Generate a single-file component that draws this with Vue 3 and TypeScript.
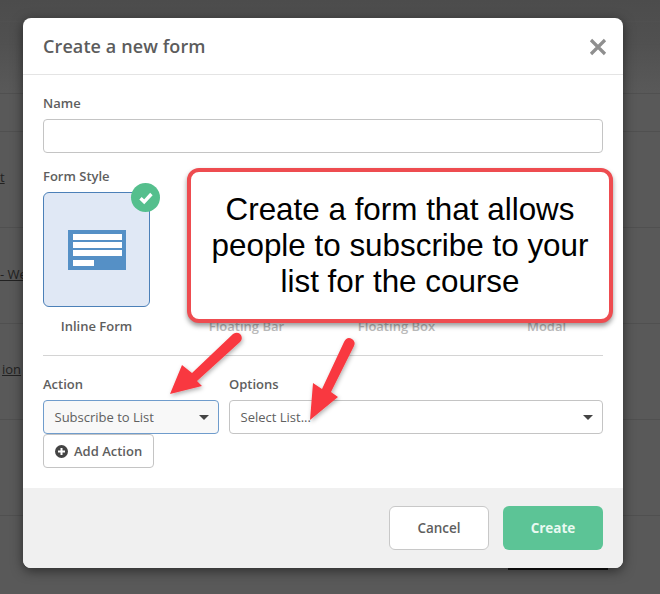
<script setup lang="ts">
const styles = [
  { name: 'Inline Form', active: true },
  { name: 'Floating Bar', active: false },
  { name: 'Floating Box', active: false },
  { name: 'Modal', active: false },
]
const backdropLines = [21, 44, 93, 131, 227, 323, 419, 515]
</script>

<template>
  <div class="page">
    <div class="backdrop">
      <i v-for="y in backdropLines" :key="y" class="bline" :style="{ top: y + 'px' }"></i>
      <span class="frag f1">t</span>
      <span class="frag f2">- We</span>
      <span class="frag f3">ion</span>
      <i class="blackbar"></i>
    </div>

    <div class="modal">
      <header class="head">
        <h2>Create a new form</h2>
        <svg class="close" width="18" height="18" viewBox="0 0 18 18"><path d="M2 2 L16 16 M16 2 L2 16" stroke="#8f8f8f" stroke-width="3.2" fill="none" /></svg>
      </header>
      <div class="body">
        <label class="lab">Name</label>
        <div class="input"></div>
        <label class="lab style-lab">Form Style</label>
        <div class="styles">
          <div v-for="s in styles" :key="s.name" class="style">
            <div class="card" :class="{ on: s.active }">
              <template v-if="s.active">
                <svg class="form-ic" width="58" height="40" viewBox="0 0 58 40">
                  <rect width="58" height="40" fill="#5590c6" />
                  <rect x="5" y="4" width="49" height="6" fill="#fff" />
                  <rect x="5" y="12" width="49" height="6" fill="#fff" />
                  <rect x="5" y="20" width="49" height="6" fill="#fff" />
                  <rect x="5" y="30" width="21" height="6" fill="#fff" />
                </svg>
                <span class="check">
                  <svg width="16" height="14" viewBox="0 0 16 14"><path d="M2.5 7.2 L6.2 10.8 L13.4 3" stroke="#fff" stroke-width="3.4" fill="none" /></svg>
                </span>
              </template>
            </div>
            <div class="style-name" :class="{ on: s.active }">{{ s.name }}</div>
          </div>
        </div>
        <hr class="rule" />
        <div class="actions">
          <div class="col-a">
            <label class="lab">Action</label>
            <div class="select focus">Subscribe to List<i class="caret"></i></div>
          </div>
          <div class="col-b">
            <label class="lab">Options</label>
            <div class="select">Select List...<i class="caret"></i></div>
          </div>
        </div>
        <button class="add" type="button">
          <svg width="13" height="13" viewBox="0 0 13 13"><circle cx="6.5" cy="6.5" r="6.5" fill="#444" /><path d="M6.5 3 V10 M3 6.5 H10" stroke="#fff" stroke-width="2" /></svg>
          Add Action
        </button>
      </div>
      <footer class="foot">
        <button class="btn cancel" type="button">Cancel</button>
        <button class="btn create" type="button">Create</button>
      </footer>
    </div>

    <div class="callout">Create a form that allows people to subscribe to your list for the course</div>

    <svg class="arrows" width="660" height="594" viewBox="0 0 660 594">
      <defs>
        <filter id="sh" x="-30%" y="-30%" width="160%" height="160%">
          <feDropShadow dx="1" dy="2" stdDeviation="2" flood-color="#000" flood-opacity="0.3" />
        </filter>
      </defs>
      <g filter="url(#sh)" fill="#f9393f">
        <path d="M170 394 L182 365 L192 373 L233 334 Q238 331 241 335 Q243 339 240 342 L197 381 L202 386 Z" />
        <path d="M310 420 L313 383 L322 389 L344 342 Q347 336 352 339 Q356 342 354 346 L331 392 L338 397 Z" />
      </g>
    </svg>
  </div>
</template>

<style>
html, body { margin: 0; padding: 0; }
</style>

<style scoped>
.page {
  position: relative;
  width: 660px;
  height: 594px;
  overflow: hidden;
  background: #595959;
  font-family: "Open Sans", sans-serif;
  color: #5a5a5a;
  box-sizing: border-box;
  padding: 18px 37px 26px 23px;
}
.backdrop { position: absolute; inset: 0; background: linear-gradient(#4c4c4c 0, #505050 40px, #595959 93px); }
.bline { position: absolute; left: 0; right: 0; height: 1px; background: #505050; }
.frag { position: absolute; font-size: 13px; color: #222; text-decoration: underline; }
.f1 { left: 0; top: 168px; }
.f2 { left: 0; top: 265px; }
.f3 { left: 2px; top: 360px; }
.blackbar { position: absolute; left: 508px; top: 568px; width: 100px; height: 2px; background: #111; }
.modal {
  position: relative;
  width: 600px;
  height: 550px;
  background: #fff;
  border-radius: 8px;
  overflow: hidden;
  display: flex;
  flex-direction: column;
  box-shadow: 0 3px 12px rgba(0, 0, 0, 0.5);
}
.head {
  height: 57px;
  flex: none;
  box-sizing: border-box;
  border-bottom: 1px solid #e4e4e4;
  padding: 0 16px 0 20px;
  display: flex;
  align-items: center;
  justify-content: space-between;
}
h2 { margin: 0; font-size: 18px; font-weight: 550; letter-spacing: 0.1px; color: #5c5c5c; }
.close { position: relative; top: 1px; }
.body { flex: 1; padding: 19px 20px 0; display: flex; flex-direction: column; align-items: flex-start; }
.lab { display: block; font-size: 13px; line-height: 18px; font-weight: 550; color: #5e5e5e; height: 20px; }
.input { width: 100%; box-sizing: border-box; height: 34px; border: 1px solid #c4c4c4; border-radius: 4px; margin-top: 5px; }
.style-lab { margin-top: 14px; height: 25px; }
.styles { display: grid; grid-template-columns: repeat(4, 107px); column-gap: 43px; width: 100%; }
.style { display: flex; flex-direction: column; align-items: center; }
.card { position: relative; width: 107px; height: 115px; box-sizing: border-box; border-radius: 6px; border: 1px solid #e4e4e4; display: flex; align-items: center; justify-content: center; }
.card.on { background: #e0e8f5; border-color: #4c80b8; }
.check { position: absolute; right: -11px; top: -10px; width: 29px; height: 29px; border-radius: 50%; background: #55bf8d; display: flex; align-items: center; justify-content: center; }
.style-name { margin-top: 10px; font-size: 13px; line-height: 18px; font-weight: 550; color: #bbb; }
.style-name.on { color: #5e5e5e; }
.rule { width: 100%; height: 1px; border: 0; background: #d4d4d4; margin: 20px 0 0; }
.actions { display: flex; gap: 10px; width: 100%; margin-top: 19px; }
.col-a { width: 176px; flex: none; }
.col-b { flex: 1; }
.actions .lab { height: 25px; }
.select { position: relative; height: 34px; box-sizing: border-box; border: 1px solid #c4c4c4; border-radius: 4px; padding: 0 10.500px; font-size: 13px; line-height: 32px; color: #606060; }
.select.focus { border-color: #6f9ccc; background: #f8f8f8; }
.caret { position: absolute; right: 9px; top: 14px; border: 5px solid transparent; border-top-color: #444; border-bottom: 0; }
.add { height: 34px; width: 111px; box-sizing: border-box; background: #fff; border: 1px solid #c4c4c4; border-radius: 4px; padding: 0 0 0 11px; display: flex; align-items: center; gap: 6px; font: 550 13px "Open Sans", sans-serif; color: #5e5e5e; }
.foot { height: 80px; flex: none; background: #f0f0f0; display: flex; justify-content: flex-end; align-items: flex-start; gap: 14px; box-sizing: border-box; padding: 18px 20px 0; }
.btn { width: 100px; height: 44px; box-sizing: border-box; border-radius: 6px; font: 550 13.500px "Open Sans", sans-serif; }
.cancel { background: #fff; border: 1px solid #c8c8c8; color: #5e5e5e; }
.create { background: #5cc496; border: 0; color: #e9f9f1; font-weight: 700; }
.callout {
  position: absolute;
  left: 187px;
  top: 168px;
  width: 426px;
  height: 155px;
  box-sizing: border-box;
  padding: 1px 14px 0;
  border: 4px solid #ee4c50;
  border-radius: 12px;
  background: #fff;
  box-shadow: 0 3px 5px rgba(0, 0, 0, 0.4);
  display: flex;
  align-items: center;
  justify-content: center;
  text-align: center;
  font: 31.400px/36px "Liberation Sans", Arial, sans-serif;
  color: #000;
}
.arrows { position: absolute; left: 0; top: 0; pointer-events: none; }
</style>
